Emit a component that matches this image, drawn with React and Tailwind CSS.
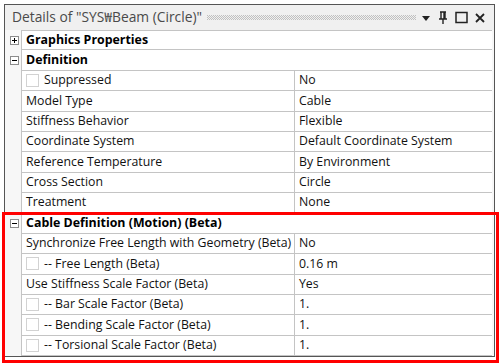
const rows = [
  { group: true, label: "Graphics Properties", open: false },
  { group: true, label: "Definition", open: true },
  { label: "Suppressed", value: "No", check: true },
  { label: "Model Type", value: "Cable" },
  { label: "Stiffness Behavior", value: "Flexible" },
  { label: "Coordinate System", value: "Default Coordinate System" },
  { label: "Reference Temperature", value: "By Environment" },
  { label: "Cross Section", value: "Circle" },
  { label: "Treatment", value: "None" },
  { group: true, label: "Cable Definition (Motion) (Beta)", open: true },
  { label: "Synchronize Free Length with Geometry (Beta)", value: "No" },
  { label: "-- Free Length (Beta)", value: "0.16 m", check: true },
  { label: "Use Stiffness Scale Factor (Beta)", value: "Yes" },
  { label: "-- Bar Scale Factor (Beta)", value: "1.", check: true },
  { label: "-- Bending Scale Factor (Beta)", value: "1.", check: true },
  { label: "-- Torsional Scale Factor (Beta)", value: "1.", check: true },
];

function Expander({ open }) {
  return (
    <svg width="9" height="9" viewBox="0 0 9 9" className="block">
      <rect x="0.5" y="0.5" width="8" height="8" fill="#fff" stroke="#8c8c8c" />
      <path d="M2 4.5h5" stroke="#000" strokeWidth="1" />
      {!open && <path d="M4.5 2v5" stroke="#000" strokeWidth="1" />}
    </svg>
  );
}

function Row({ row, first }) {
  return (
    <div className="flex h-[20.375px]">
      <div className="flex w-[16px] shrink-0 items-center justify-center pl-[2px]">
        {row.group && <Expander open={row.open} />}
      </div>
      <div className={`flex min-w-0 flex-1 border-b border-l border-[#c4c4c4] bg-white ${first ? "border-t" : ""}`}>
        {row.group ? (
          <div className="flex items-center pl-[4px] text-[12.4px] font-bold text-black">{row.label}</div>
        ) : (
          <>
            <div className="flex w-[273px] shrink-0 items-center gap-[5px] border-r border-[#c4c4c4] pl-[4px] whitespace-nowrap">
              {row.check && <span className="block h-[13px] w-[13px] shrink-0 border border-[#d2d2d2] bg-white" />}
              <span>{row.label}</span>
            </div>
            <div className="flex items-center pl-[4px] whitespace-nowrap">{row.value}</div>
          </>
        )}
      </div>
    </div>
  );
}

export default function App() {
  return (
    <div className="relative h-[364px] w-[500px] overflow-hidden bg-white pt-[4px] pl-[4px] text-[#111] [font-family:'Open_Sans','Noto_Sans_CJK_KR',sans-serif] text-[12.3px]">
      <div className="w-[491px] border border-[#555]">
        <div className="flex h-[25px] items-center bg-[#f0f0f0] pl-[7px] pr-[8px] text-[13.8px] text-[#4a4a4a]">
          <span className="whitespace-nowrap">Details of "SYS₩Beam (Circle)"</span>
          <svg className="mx-[5px] h-[5px] flex-1" preserveAspectRatio="none">
            <defs>
              <pattern id="dots" width="2" height="2" patternUnits="userSpaceOnUse">
                <rect width="1" height="1" fill="#c0c0c0" />
                <rect x="1" y="1" width="1" height="1" fill="#c0c0c0" />
              </pattern>
            </defs>
            <rect width="100%" height="100%" fill="url(#dots)" />
          </svg>
          <div className="flex items-center gap-[6px]">
            <svg width="10" height="10" viewBox="0 0 10 10">
              <path d="M1 3h8L5 8z" fill="#222" />
            </svg>
            <svg width="12" height="14" viewBox="0 0 12 14">
              <path d="M3 1h6M4 1v7M8 1v7M7 1v7M2 8h8M6 8v5" stroke="#222" strokeWidth="1.4" fill="none" />
            </svg>
            <svg width="13" height="13" viewBox="0 0 13 13">
              <rect x="1" y="1.5" width="11" height="10" fill="none" stroke="#222" strokeWidth="1.5" />
            </svg>
            <svg width="12" height="12" viewBox="0 0 12 12">
              <path d="M2 2l8 8M10 2l-8 8" stroke="#222" strokeWidth="1.8" />
            </svg>
          </div>
        </div>
        <div className="bg-[#f7f7f7] pr-[2px]">
          {rows.map((row, i) => (
            <Row key={i} row={row} first={i === 0} />
          ))}
        </div>
      </div>
      <div className="pointer-events-none absolute top-[212px] left-[2px] h-[151px] w-[497px] border-[3px] border-[#ff0000]" />
    </div>
  );
}
